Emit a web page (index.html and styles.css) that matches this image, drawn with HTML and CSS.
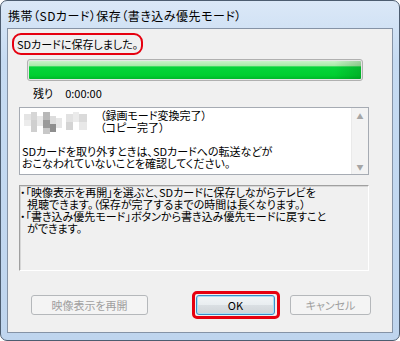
FILE: index.html
```
<html lang="ja">
<head>
  <meta charset="UTF-8" />
  <title>携帯（SDカード）保存（書き込み優先モード）</title>
  <link rel="stylesheet" href="styles.css">
</head>
<body>
  <div class="window">
    <div class="titlebar">携帯（SDカード）保存（書き込み優先モード）</div>
    <div class="client">
      <div class="status">SDカードに保存しました。</div>

      <div class="progress"><div class="progress-fill"></div></div>

      <div class="remain">
        <span class="remain-label">残り</span>
        <span class="remain-time">0:00:00</span>
      </div>

      <div class="result">
        <div class="result-body">
          <div class="result-head">
            <svg class="thumb" width="70" height="30" viewBox="0 0 70 30">
              <rect x="0" y="0" width="70" height="30" fill="#fff"/>
              <rect x="2" y="4" width="7" height="6" fill="#e4e4e4"/>
              <rect x="2" y="10" width="7" height="6" fill="#ececec"/>
              <rect x="9" y="2" width="6" height="8" fill="#d6d6d6"/>
              <rect x="9" y="10" width="6" height="12" fill="#cfcfcf"/>
              <rect x="15" y="6" width="6" height="10" fill="#e8e8e8"/>
              <rect x="21" y="2" width="7" height="8" fill="#b8b8b8"/>
              <rect x="21" y="10" width="7" height="8" fill="#9a9a9a"/>
              <rect x="21" y="18" width="7" height="6" fill="#c8c8c8"/>
              <rect x="28" y="6" width="6" height="8" fill="#dcdcdc"/>
              <rect x="28" y="14" width="6" height="8" fill="#8e8e8e"/>
              <rect x="34" y="8" width="6" height="10" fill="#e6e6e6"/>
              <rect x="44" y="4" width="7" height="8" fill="#e2e2e2"/>
              <rect x="44" y="12" width="7" height="8" fill="#d4d4d4"/>
              <rect x="51" y="2" width="6" height="10" fill="#ebebeb"/>
              <rect x="57" y="4" width="8" height="8" fill="#dadada"/>
              <rect x="57" y="12" width="8" height="8" fill="#e8e8e8"/>
            </svg>
            <div class="result-lines">（録画モード変換完了）<br>（コピー完了）</div>
          </div>
          <p class="result-text">SDカードを取り外すときは、SDカードへの転送などが<br>おこなわれていないことを確認してください。</p>
        </div>
        <div class="scrollbar">
          <span class="arrow">▲</span>
          <span class="arrow">▼</span>
        </div>
      </div>

      <div class="notes">
        <div class="note">・「映像表示を再開」を選ぶと、SDカードに保存しながらテレビを<br>視聴できます。（保存が完了するまでの時間は長くなります。）</div>
        <div class="note">・「書き込み優先モード」ボタンから書き込み優先モードに戻すこと<br>ができます。</div>
      </div>

      <div class="buttons">
        <button class="btn btn-resume" disabled>映像表示を再開</button>
        <span class="ok-mark"><button class="btn btn-ok">OK</button></span>
        <button class="btn btn-cancel" disabled>キャンセル</button>
      </div>
    </div>
  </div>
</body>
</html>
```

FILE: styles.css
```
body {
  margin: 0;
  font-family: "Noto Sans CJK JP", sans-serif;
  font-size: 11px;
  font-feature-settings: "palt";
  color: #000;
  background: #fff;
}

.window {
  width: 400px;
  height: 341px;
  box-sizing: border-box;
  border: 1px solid #4d5d70;
  border-radius: 7px;
  background: linear-gradient(#dbe8f7, #c6dbf2 60px, #bfd5ee);
  padding: 0 6px 7px 6px;
}

.titlebar {
  height: 27px;
  line-height: 30px;
  padding-left: 1px;
  font-size: 12px;
  letter-spacing: 0.5px;
  white-space: nowrap;
}

.client {
  height: 305px;
  box-sizing: border-box;
  border: 1px solid #8593a6;
  background: #f0f0f0;
  padding-top: 4px;
}

.status {
  width: fit-content;
  margin-left: 4px;
  border: 2px solid #e6000f;
  border-radius: 9px;
  padding: 0 3px 0 3px;
  line-height: 18px;
}

.progress {
  margin: 4px 0 0 19px;
  width: 336px;
  height: 22px;
  box-sizing: border-box;
  border: 1px solid #b0b0b0;
  border-radius: 3px;
  padding: 1px;
  background: #e6e6e6;
}

.progress-fill {
  height: 100%;
  border-radius: 1px;
  background:
    linear-gradient(90deg, rgba(0, 0, 0, 0) 92%, rgba(0, 60, 0, 0.2) 100%),
    linear-gradient(#c9f3c9, #a6e9a6 28%, #06d43a 32%, #00cf30 80%, #00b82a 100%);
}

.remain {
  margin: 6px 0 0 25px;
  line-height: 12px;
  display: flex;
  gap: 12px;
}

.result {
  margin: 8px 0 0 11px;
  width: 350px;
  height: 68px;
  box-sizing: border-box;
  border: 1px solid #a6abb3;
  background: #fff;
  display: flex;
}

.result-body {
  flex: 1;
  padding: 1px 0 0 2px;
}

.result-head {
  display: flex;
  gap: 8px;
}

.thumb {
  display: block;
  margin-top: 1px;
}

.result-lines {
  line-height: 12px;
}

.result-text {
  margin: 5px 0 0 0;
  line-height: 12px;
}

.scrollbar {
  width: 16px;
  background: #f3f3f3;
  border-left: 1px solid #eaeaea;
  display: flex;
  flex-direction: column;
  justify-content: space-between;
  align-items: center;
  padding: 4px 0 3px 0;
}

.arrow {
  font-size: 7px;
  line-height: 8px;
  color: #a5a5a5;
}

.notes {
  margin: 10px 0 0 11px;
  width: 350px;
  height: 86px;
  box-sizing: border-box;
  border: 1px solid #a0a0a0;
  border-right-color: #fff;
  border-bottom-color: #fff;
  box-shadow: inset 1px 1px 0 #d6d6d6;
  background: #f0f0f0;
}

.note {
  line-height: 12px;
  padding-left: 7px;
  text-indent: -7px;
}

.buttons {
  margin: 21px 0 0 0;
  display: flex;
  align-items: center;
  height: 25px;
}

.btn {
  font-family: "Noto Sans CJK JP", sans-serif;
  font-size: 11px;
  font-feature-settings: "palt";
  height: 20px;
  padding: 0;
  box-sizing: border-box;
  border: 1px solid #707070;
  border-radius: 3px;
  background: linear-gradient(#f2f2f2, #ebebeb 50%, #dddddd 51%, #cfcfcf);
  color: #000;
  line-height: 18px;
}

.btn:disabled {
  border-color: #b5b8bb;
  background: #f4f4f4;
  color: #a0a0a0;
}

.btn-resume {
  margin-left: 23px;
  width: 117px;
}

.ok-mark {
  margin-left: 44px;
  border: 3px solid #e6000f;
  border-radius: 5px;
  padding: 1px 2px 1px 1px;
  display: flex;
}

.btn-ok {
  width: 79px;
  border-color: #3c8dc5;
  box-shadow: inset 0 0 0 1px #a8e2f7;
  background: linear-gradient(#f2f5f7, #e8edf0 50%, #dadfe3 51%, #cfd4d8);
}

.btn-cancel {
  margin-left: 10px;
  width: 81px;
}
```
